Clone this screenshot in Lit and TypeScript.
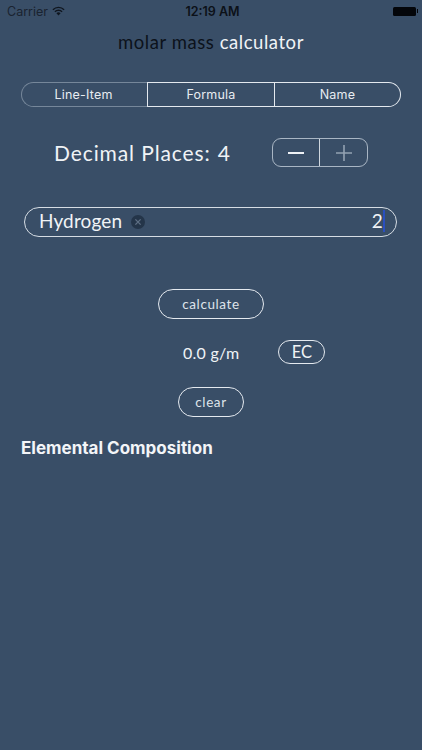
import { LitElement, html, css } from "lit";
import { customElement } from "lit/decorators.js";

@customElement("app-root")
export class AppRoot extends LitElement {
  static styles = css`
    :host { display: block; width: 422px; height: 750px; background: #394e67; overflow: hidden; color: #f0f3f6; font-family: "Lato", "Liberation Sans", sans-serif; }
    .status { height: 22px; display: grid; grid-template-columns: 1fr auto 1fr; align-items: center; padding: 0 4px 0 7px; font-family: "Inter", "Liberation Sans", sans-serif; font-size: 12.5px; color: #10161f; }
    .left { display: flex; align-items: center; gap: 4px; color: #1a2330; }
    .time { font-weight: 600; font-size: 12.5px; color: #0c1118; }
    .right { display: flex; justify-content: flex-end; align-items: center; }
    .batt { width: 23px; height: 9px; background: #04060a; border-radius: 1.5px; }
    .nub { width: 1.5px; height: 3.5px; background: #04060a; margin-left: 1px; }
    .title { margin-top: 8px; height: 24px; line-height: 24px; text-align: center; font-size: 18.5px; font-weight: 400; letter-spacing: 0.55px; color: #f0f3f6; }
    .title span { color: #0c121b; }
    .seg { margin: 28px 21px 0; height: 25px; display: grid; grid-template-columns: 126px 128px 1fr; box-sizing: border-box; }
    .seg div { display: flex; align-items: center; justify-content: center; font-family: "Inter", "Liberation Sans", sans-serif; font-size: 12.5px; letter-spacing: 0.2px; box-sizing: border-box; border: 1px solid #e4e9ef; border-left: 0; color: #e8ecf1; }
    .seg .a { border: 1px solid #76879a; border-right: 0; border-radius: 13px 0 0 13px; padding-right: 2px; }
    .seg .b { border-left: 1.5px solid #e4e9ef; }
    .seg .c { border-radius: 0 13px 13px 0; }
    .dec { margin: 31px 54px 0; height: 29px; display: flex; align-items: center; font-size: 21px; font-weight: 400; letter-spacing: 0.9px; color: #f0f3f6; }
    .dec .n { margin-left: 7px; }
    .stepper { margin-left: auto; width: 96px; height: 29px; box-sizing: border-box; border: 1px solid #a9b6c4; border-radius: 9px; display: grid; grid-template-columns: 47px 1fr; }
    .stepper div { display: flex; align-items: center; justify-content: center; }
    .stepper .m { border-right: 1px solid #cfd7df; }
    .field { margin: 40px 25px 0 24px; height: 30px; box-sizing: border-box; border: 1.5px solid #d6dde4; border-radius: 15px; display: flex; align-items: center; padding: 0 13px 3px 14px; font-size: 19px; font-weight: 400; letter-spacing: 0.15px; color: #f0f3f6; }
    .x { margin: 3px 0 0 9px; }
    .qty { margin-left: auto; position: relative; }
    .caret { position: absolute; right: -2px; top: 1px; width: 2px; height: 22px; background: #2a4fc0; }
    .btn { box-sizing: border-box; display: flex; align-items: center; justify-content: center; border: 1px solid #e4e9ef; border-radius: 15px; height: 30px; font-size: 13.5px; font-weight: 400; letter-spacing: 0.6px; color: #dfe4ea; }
    .calc { width: 106px; margin: 52px 0 0 158px; }
    .res { margin: 21px 0 0 183px; height: 24px; display: flex; align-items: center; font-size: 16px; font-weight: 400; letter-spacing: 0.25px; color: #f0f3f6; }
    .ec { margin-left: 39px; width: 47px; height: 24px; border-radius: 12px; font-size: 16.5px; color: #f0f3f6; letter-spacing: 0; }
    .clear { width: 66px; margin: 23px 0 0 178px; }
    h2 { margin: 20px 0 0 21px; font-family: "Inter", "Liberation Sans", sans-serif; font-size: 17px; line-height: 22px; font-weight: 700; color: #f3f5f8; }
  `;

  render() {
    return html`
      <div class="status">
        <div class="left">Carrier
          <svg width="13" height="10" viewBox="0 0 13 10"><path d="M.4 3.2a8.6 8.6 0 0 1 12.2 0l-1 1a7.2 7.2 0 0 0-10.2 0zM2.4 5.2a5.8 5.8 0 0 1 8.2 0l-1 1a4.4 4.4 0 0 0-6.2 0zM4.4 7.2a3 3 0 0 1 4.2 0L6.5 9.4z" fill="#10161f"/></svg>
        </div>
        <div class="time">12:19 AM</div>
        <div class="right"><div class="batt"></div><div class="nub"></div></div>
      </div>
      <div class="title"><span>molar mass</span> calculator</div>
      <div class="seg">
        <div class="a">Line-Item</div><div class="b">Formula</div><div class="c">Name</div>
      </div>
      <div class="dec">
        <span>Decimal Places:</span><span class="n">4</span>
        <div class="stepper">
          <div class="m"><svg width="16" height="2" viewBox="0 0 16 2"><rect width="16" height="2" fill="#eef1f5"/></svg></div>
          <div><svg width="16" height="16" viewBox="0 0 16 16"><path d="M8 0v16M0 8h16" stroke="#93a2b2" stroke-width="1.6" fill="none"/></svg></div>
        </div>
      </div>
      <div class="field">
        <span>Hydrogen</span>
        <svg class="x" width="14" height="14" viewBox="0 0 14 14"><circle cx="7" cy="7" r="7" fill="#243549"/><path d="M4.4 4.4l5.2 5.2M9.6 4.4l-5.2 5.2" stroke="#5f7085" stroke-width="1.3"/></svg>
        <span class="qty">2<i class="caret"></i></span>
      </div>
      <div class="btn calc">calculate</div>
      <div class="res"><span>0.0 g/m</span><div class="btn ec">EC</div></div>
      <div class="btn clear">clear</div>
      <h2>Elemental Composition</h2>
    `;
  }
}
